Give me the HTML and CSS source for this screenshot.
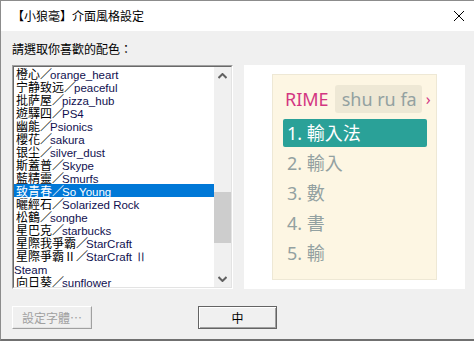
FILE: index.html
```html
<!DOCTYPE html>
<html lang="zh-Hant">
<head>
  <meta charset="UTF-8">
  <title>【小狼毫】介面風格設定</title>
  <link rel="stylesheet" href="styles.css">
</head>
<body>
  <div class="window">
    <div class="titlebar">
      <span class="title">【小狼毫】介面風格設定</span>
      <svg class="close" width="12" height="12" viewBox="0 0 12 12">
        <path d="M1 1 L11 11 M11 1 L1 11" stroke="#000" stroke-width="1" fill="none"/>
      </svg>
    </div>

    <div class="content">
      <div class="prompt">請選取你喜歡的配色：</div>

      <div class="main">
        <div class="listbox">
          <div class="listbox-inner">
            <ul class="items">
              <li>橙心／<span class="en">orange_heart</span></li>
              <li>宁静致远／<span class="en">peaceful</span></li>
              <li>批萨屋／<span class="en">pizza_hub</span></li>
              <li>遊驛四／<span class="en">PS4</span></li>
              <li>幽能／<span class="en">Psionics</span></li>
              <li>櫻花／<span class="en">sakura</span></li>
              <li>银尘／<span class="en">silver_dust</span></li>
              <li>斯蓋普／<span class="en">Skype</span></li>
              <li>藍精靈／<span class="en">Smurfs</span></li>
              <li class="selected">致青春／<span class="en">So Young</span></li>
              <li>曬經石／<span class="en">Solarized Rock</span></li>
              <li>松鶴／<span class="en">songhe</span></li>
              <li>星巴克／<span class="en">starbucks</span></li>
              <li>星際我爭霸／<span class="en">StarCraft</span></li>
              <li>星際爭霸Ⅱ／<span class="en">StarCraft Ⅱ</span></li>
              <li><span class="en">Steam</span></li>
              <li>向日葵／<span class="en">sunflower</span></li>
            </ul>
            <div class="scrollbar">
              <div class="arrow">
                <svg width="9" height="6" viewBox="0 0 9 6"><path d="M0.5 5 L4.5 1 L8.5 5" stroke="#606060" stroke-width="2" fill="none"/></svg>
              </div>
              <div class="track">
                <div class="thumb"></div>
              </div>
              <div class="arrow">
                <svg width="9" height="6" viewBox="0 0 9 6"><path d="M0.5 1 L4.5 5 L8.5 1" stroke="#606060" stroke-width="2" fill="none"/></svg>
              </div>
            </div>
          </div>
        </div>

        <div class="preview">
          <div class="cream">
            <div class="preedit">
              <span class="rime">RIME</span>
              <span class="input">shu ru fa</span>
              <span class="caret">›</span>
            </div>
            <div class="candidates">
              <div class="cand hilite">1. 輸入法</div>
              <div class="cand">2. 輸入</div>
              <div class="cand">3. 數</div>
              <div class="cand">4. 書</div>
              <div class="cand">5. 輸</div>
            </div>
          </div>
        </div>
      </div>

      <div class="buttons">
        <button class="btn" disabled>設定字體…</button>
        <button class="btn default">中</button>
      </div>
    </div>
  </div>
</body>
</html>
```

FILE: styles.css
```css
body {
  margin: 0;
  width: 474px;
  height: 341px;
  overflow: hidden;
  font-family: "Noto Sans CJK TC", "Liberation Sans", sans-serif;
  font-size: 12px;
  color: #000;
}
.window {
  width: 474px;
  height: 341px;
  box-sizing: border-box;
  background: #f0f0f0;
  border-left: 1px solid #8c8c8c;
  border-top: 1px solid #8c8c8c;
  border-bottom: 2px solid #707070;
  overflow: hidden;
}
.titlebar {
  height: 30px;
  background: #fff;
  display: flex;
  align-items: center;
  justify-content: space-between;
  padding: 0 8px 0 11px;
}
.title {
  font-size: 12px;
  line-height: 14px;
}
.close {
  margin-right: 1px;
}
.content {
  padding: 11px 0 0 11px;
}
.prompt {
  line-height: 14px;
  height: 14px;
  margin-bottom: 9px;
}
.main {
  display: flex;
}

/* list box */
.listbox {
  width: 221px;
  height: 224px;
  box-sizing: border-box;
  border: 1px solid;
  border-color: #a0a0a0 #fff #fff #a0a0a0;
}
.listbox-inner {
  height: 100%;
  box-sizing: border-box;
  border: 1px solid;
  border-color: #696969 #e3e3e3 #e3e3e3 #696969;
  background: #fff;
  display: flex;
  overflow: hidden;
}
.items {
  list-style: none;
  margin: 0;
  padding: 0;
  width: 200px;
  overflow: hidden;
}
.items li {
  height: 13px;
  line-height: 13px;
  padding-left: 2px;
  white-space: nowrap;
  font-size: 12px;
}
.items .en {
  font-family: "Liberation Sans", sans-serif;
  font-size: 11.5px;
  color: #101050;
  margin-left: -2px;
}
.items li.selected {
  background: #0078d7;
  color: #fff;
}
.items li.selected .en {
  color: #fff;
}
.scrollbar {
  width: 17px;
  background: #f0f0f0;
  display: flex;
  flex-direction: column;
}
.arrow {
  height: 17px;
  display: flex;
  align-items: center;
  justify-content: center;
}
.track {
  flex: 1;
}
.thumb {
  margin-top: 108px;
  height: 51px;
  background: #cdcdcd;
}

/* preview */
.preview {
  width: 221px;
  height: 224px;
  margin-left: 11px;
  box-sizing: border-box;
  background: #fff;
  padding: 9px 0;
  display: flex;
  justify-content: center;
}
.cream {
  width: 165px;
  box-sizing: border-box;
  background: #fdf6e3;
  border: 1px solid #eee8d5;
  padding: 10px 10px;
  font-family: "Noto Sans", "Noto Sans CJK TC", sans-serif;
  font-size: 18px;
}
.preedit {
  height: 28px;
  display: flex;
  align-items: center;
  padding-left: 2px;
  white-space: nowrap;
}
.rime {
  color: #d33682;
  margin-right: 6px;
  flex-shrink: 0;
}
.input {
  flex-shrink: 0;
  background: #eee8d5;
  color: #93a1a1;
  border-radius: 3px;
  height: 28px;
  line-height: 28px;
  padding: 0 5px 0 7px;
}
.caret {
  color: #d33682;
  margin-left: 4px;
  font-size: 16px;
}
.candidates {
  margin-top: 6px;
  display: flex;
  flex-direction: column;
  gap: 2px;
}
.cand {
  height: 28px;
  line-height: 28px;
  padding: 0 4px;
  color: #93a1a1;
  white-space: nowrap;
}
.cand.hilite {
  width: 144px;
  box-sizing: border-box;
  background: #2aa198;
  color: #fff;
  border-radius: 2px;
}

/* buttons */
.buttons {
  margin-top: 17px;
  display: flex;
  gap: 106px;
}
.btn {
  width: 80px;
  height: 23px;
  box-sizing: border-box;
  background: #f0f0f0;
  font-family: "Noto Sans CJK TC", sans-serif;
  font-size: 12px;
  padding: 0;
  border: 1px solid;
  border-color: #fff #a0a0a0 #a0a0a0 #fff;
  box-shadow: inset -1px -1px 0 #e3e3e3;
}
.btn:disabled {
  color: #a0a0a0;
}
.btn.default {
  width: 79px;
  border: 1px solid #646464;
  box-shadow: inset 1px 1px 0 #fff, inset -1px -1px 0 #a0a0a0;
  color: #000;
}
```
